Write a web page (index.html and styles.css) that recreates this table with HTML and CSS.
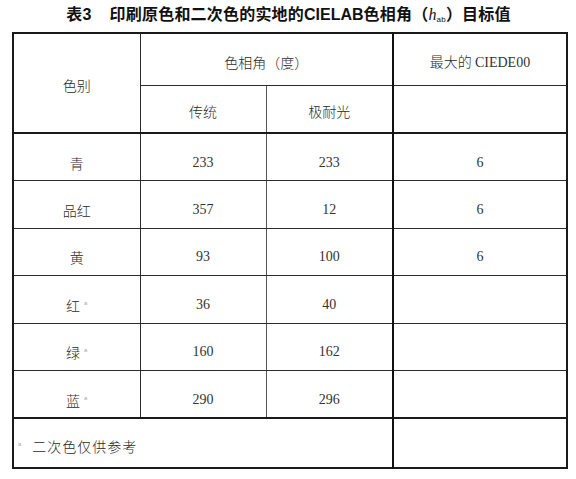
FILE: index.html
```html
<!DOCTYPE html>
<html lang="zh">
<head>
<meta charset="utf-8">
<link rel="stylesheet" href="styles.css">
</head>
<body>
<div class="page">
  <h1 class="title"><span class="tnum">表3</span><span>印刷原色和二次色的实地的<span class="lat">CIELAB</span>色相角（<i class="h">h</i><sub class="ab">ab</sub>）目标值</span></h1>
  <table class="grid">
    <colgroup>
      <col class="c1"><col class="c2"><col class="c3"><col class="c4">
    </colgroup>
    <tr class="hr1">
      <td rowspan="2" class="thin-r">色别</td>
      <td colspan="2">色相角（度）</td>
      <td class="thick-l">最大的 <span class="num">CIEDE00</span></td>
    </tr>
    <tr class="hr2">
      <td class="gray-r">传统</td>
      <td>极耐光</td>
      <td class="thick-l"></td>
    </tr>
    <tr class="row first">
      <td>青</td><td class="num gray-r">233</td><td class="num">233</td><td class="num thick-l">6</td>
    </tr>
    <tr class="row">
      <td>品红</td><td class="num gray-r">357</td><td class="num">12</td><td class="num thick-l">6</td>
    </tr>
    <tr class="row">
      <td>黄</td><td class="num gray-r">93</td><td class="num">100</td><td class="num thick-l">6</td>
    </tr>
    <tr class="row">
      <td>红<sup class="note">a</sup></td><td class="num gray-r">36</td><td class="num">40</td><td class="thick-l"></td>
    </tr>
    <tr class="row">
      <td>绿<sup class="note">a</sup></td><td class="num gray-r">160</td><td class="num">162</td><td class="thick-l"></td>
    </tr>
    <tr class="row">
      <td>蓝<sup class="note">a</sup></td><td class="num gray-r">290</td><td class="num">296</td><td class="thick-l"></td>
    </tr>
    <tr class="foot">
      <td colspan="3" class="foot-text"><sup class="fnote">a</sup>二次色仅供参考</td>
      <td class="thick-l"></td>
    </tr>
  </table>
</div>
</body>
</html>
```
FILE: styles.css
```css
html, body {
  margin: 0;
  padding: 0;
  background: #ffffff;
}
.page {
  width: 576px;
  height: 479px;
  padding: 0 0 0 12px;
  box-sizing: border-box;
  font-family: "Noto Sans CJK SC", "Liberation Serif", serif;
  color: #2a2a2a;
}
.title {
  margin: 0;
  height: 32px;
  width: 553px;
  display: flex;
  justify-content: center;
  align-items: center;
  gap: 18px;
  font-family: "Liberation Sans", "Noto Sans CJK SC", sans-serif;
  font-size: 16px;
  font-weight: bold;
  color: #111;
  padding-bottom: 7px;
  box-sizing: border-box;
  letter-spacing: 0.2px;
}
.title .lat {
  font-family: "Liberation Sans Narrow", "Liberation Sans", sans-serif;
  font-weight: bold;
  letter-spacing: 0;
}
.title .h {
  font-family: "Liberation Serif", serif;
  font-weight: normal;
  font-size: 16px;
}
.title .ab {
  font-family: "Liberation Sans", sans-serif;
  font-size: 8px;
  font-weight: normal;
  vertical-align: -2px;
}
.grid {
  border-collapse: collapse;
  table-layout: fixed;
  width: 554px;
  border: 2px solid #1a1a1a;
  font-size: 14px;
  font-weight: 300;
}
.c1 { width: 127px; }
.c2 { width: 126px; }
.c3 { width: 127px; }
.c4 { width: 174px; }
.grid td {
  border: 1px solid #2b2b2b;
  text-align: center;
  vertical-align: middle;
  padding: 0;
  line-height: 16px;
}
.hr1 td { height: 47px; padding-top: 4px; }
.hr2 td { height: 43px; padding-top: 3px; border-top-color: #8a8a8a; }
.hr2 td.thick-l { border-top: 1px solid #8a8a8a; }
.row td { height: 35.4px; padding-top: 11px; }
.row.first td { border-top: 2px solid #1a1a1a; }
.foot td { height: 42px; padding-top: 2px; border-top: 2px solid #1a1a1a; }
.grid td.thick-l { border-left: 2px solid #111; }
.grid td.gray-r { border-right-color: #555; }
.num {
  font-family: "Liberation Serif", serif;
  font-size: 14px;
  font-weight: normal;
  color: #333;
}
.note {
  font-family: "Liberation Sans", sans-serif;
  font-size: 6px;
  color: #aaa;
  margin-left: 4px;
  vertical-align: 6px;
  line-height: 0;
}
.grid td.foot-text {
  text-align: left;
  padding-left: 4px;
  padding-top: 6px;
  letter-spacing: 1px;
}
.fnote {
  font-family: "Liberation Sans", sans-serif;
  font-size: 6px;
  color: #aaa;
  vertical-align: 6px;
  line-height: 0;
  margin-right: 10px;
}
```
